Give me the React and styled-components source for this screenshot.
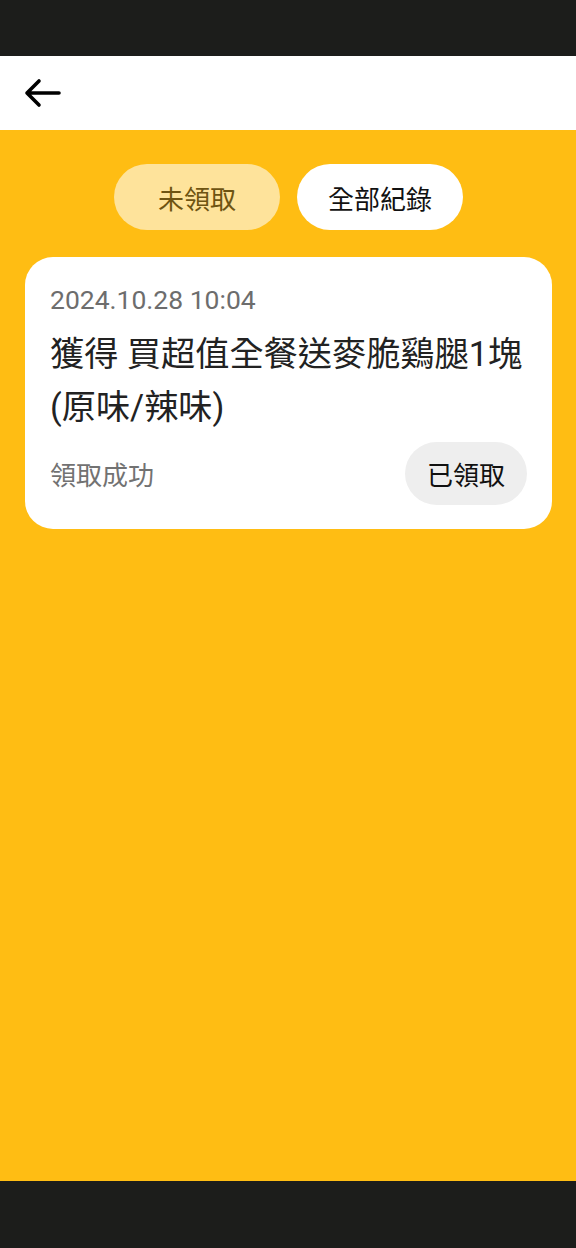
import React from "react";
import styled, { createGlobalStyle } from "styled-components";

const GlobalStyle = createGlobalStyle`
  html, body {
    margin: 0;
    padding: 0;
  }
  body {
    font-family: Roboto, "Noto Sans CJK TC", sans-serif;
  }
`;

const Screen = styled.div`
  display: flex;
  flex-direction: column;
  width: 576px;
  height: 1248px;
  background: #ffbd13;
`;

const StatusBar = styled.div`
  height: 56px;
  background: #1c1d1b;
  flex-shrink: 0;
`;

const Header = styled.div`
  height: 74px;
  background: #fff;
  display: flex;
  align-items: center;
  padding-left: 24px;
  flex-shrink: 0;
`;

const BackButton = styled.button`
  border: none;
  background: transparent;
  padding: 0;
  width: 40px;
  height: 40px;
  display: flex;
  align-items: center;
  cursor: pointer;
`;

const Main = styled.main`
  flex: 1;
  background: #ffbd13;
  padding: 34px 24px 0 25px;
`;

const Tabs = styled.div`
  display: flex;
  justify-content: center;
  gap: 17px;
`;

const Tab = styled.button`
  width: 166px;
  height: 66px;
  border: none;
  border-radius: 33px;
  font-family: Roboto, "Noto Sans CJK TC", sans-serif;
  font-size: 26px;
  background: ${(p) => (p.$active ? "#fee39b" : "#ffffff")};
  color: ${(p) => (p.$active ? "#6e5412" : "#111111")};
  cursor: pointer;
`;

const Card = styled.div`
  margin-top: 27px;
  background: #fff;
  border-radius: 28px;
  padding: 26px 25px 24px 25px;
`;

const DateText = styled.div`
  font-size: 26.5px;
  line-height: 34px;
  color: #6d6d6d;
`;

const Title = styled.div`
  margin-top: 11px;
  font-size: 34.2px;
  line-height: 53px;
  color: #222222;
`;

const Footer = styled.div`
  margin-top: 8px;
  display: flex;
  align-items: center;
  justify-content: space-between;
`;

const Status = styled.span`
  font-size: 26px;
  color: #727272;
`;

const ClaimedButton = styled.button`
  height: 63px;
  padding: 0 22px;
  border: none;
  border-radius: 32px;
  background: #eeeeee;
  color: #111;
  font-family: Roboto, "Noto Sans CJK TC", sans-serif;
  font-size: 26px;
`;

const NavBar = styled.div`
  height: 67px;
  background: #1c1d1b;
  flex-shrink: 0;
`;

export default function App() {
  return (
    <>
      <GlobalStyle />
      <Screen>
        <StatusBar />
        <Header>
          <BackButton aria-label="返回">
            <svg width="38" height="30" viewBox="0 0 38 30" fill="none">
              <path
                d="M3 15H35M3 15L15 3M3 15L15 27"
                stroke="#000"
                strokeWidth="3.6"
                strokeLinecap="round"
                strokeLinejoin="round"
              />
            </svg>
          </BackButton>
        </Header>
        <Main>
          <Tabs>
            <Tab $active>未領取</Tab>
            <Tab>全部紀錄</Tab>
          </Tabs>
          <Card>
            <DateText>2024.10.28 10:04</DateText>
            <Title>獲得 買超值全餐送麥脆鷄腿1塊(原味/辣味)</Title>
            <Footer>
              <Status>領取成功</Status>
              <ClaimedButton>已領取</ClaimedButton>
            </Footer>
          </Card>
        </Main>
        <NavBar />
      </Screen>
    </>
  );
}
